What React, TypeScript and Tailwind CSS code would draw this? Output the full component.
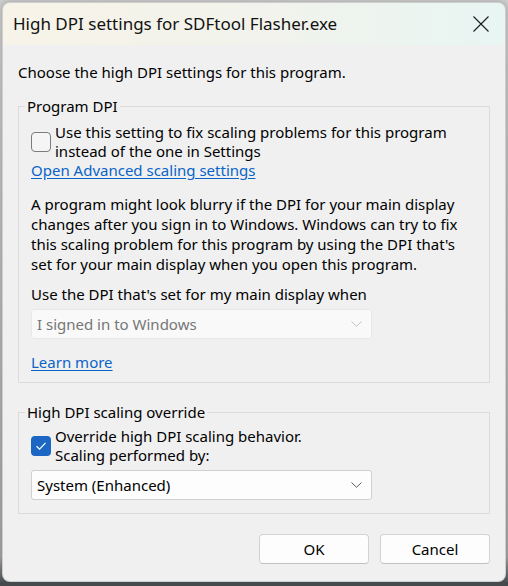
import { ChevronDown } from 'lucide-react';

function Check({ checked }: { checked?: boolean }) {
  if (checked) {
    return (
      <span className="w-[20px] h-[20px] shrink-0 rounded-[4px] bg-[#1b67c3] flex items-center justify-center">
        <svg width="12" height="10" viewBox="0 0 12 10" fill="none">
          <path d="M1.5 5.2 L4.6 8.2 L10.5 1.8" stroke="#ffffff" strokeWidth="1.2" />
        </svg>
      </span>
    );
  }
  return (
    <span className="w-[20px] h-[20px] shrink-0 rounded-[4px] border border-[#7c7c7c] bg-[#f5f5f5]" />
  );
}

function Combo({ label, disabled }: { label: string; disabled?: boolean }) {
  return (
    <div
      className={
        disabled
          ? 'w-[341px] h-[30px] flex items-center justify-between pl-[5px] pr-[9px] rounded-[3px] border border-[#e8e8e8] bg-[#f9f9f9] text-[#767676]'
          : 'w-[341px] h-[30px] flex items-center justify-between pl-[5px] pr-[9px] rounded-[3px] border border-[#d0d0d0] bg-[#fdfdfd] text-black'
      }
    >
      <span className="leading-[20px]">{label}</span>
      <svg width="11" height="6" viewBox="0 0 11 6" fill="none">
        <path d="M0.5 0.5 L5.5 5.3 L10.5 0.5" stroke={disabled ? '#c2c2c2' : '#5c5c5c'} strokeWidth="1" />
      </svg>
    </div>
  );
}

export default function App() {
  return (
    <div className="w-[508px] h-[586px] overflow-hidden flex flex-col bg-[linear-gradient(180deg,#cfcfcf_0%,#a8a8a8_95%,#3d474c_100%)] font-['Noto_Sans',sans-serif] text-[15px] text-black">
      <div className="ml-[2px] mt-[2px] w-[504px] h-[580px] shrink-0 rounded-[8px] overflow-hidden flex flex-col bg-[#f0f0f0] border border-[#b9b9b9]/60 shadow-[0_0_6px_rgba(0,0,0,0.25)]">
        {/* title bar */}
        <div className="h-[42px] shrink-0 flex items-center justify-between pl-[10px] pr-[16px] bg-[linear-gradient(90deg,#f7f3e8_0%,#f1f3ec_55%,#e8f5f3_100%)]">
          <span className="text-[17px] leading-[20px] text-[#111]">High DPI settings for SDFtool Flasher.exe</span>
          <svg width="16" height="16" viewBox="0 0 16 16" fill="none">
            <path d="M0.5 0.5 L15.5 15.5 M15.5 0.5 L0.5 15.5" stroke="#1a1a1a" strokeWidth="1.1" />
          </svg>
        </div>

        {/* body */}
        <div className="flex-1 flex flex-col px-[15px] pt-[17px]">
          <p className="leading-[20px]">Choose the high DPI settings for this program.</p>

          <fieldset className="mt-[14px] border border-[#dcdcdc] px-[6px] pb-[10px]">
            <legend className="px-[2px] leading-[20px]">Program DPI</legend>
            <div className="pl-[6px] flex flex-col items-start">
              <div className="mt-[7px] flex items-center gap-[4px]">
                <Check />
                <div className="leading-[19px]">
                  Use this setting to fix scaling problems for this program
                  <br />
                  instead of the one in Settings
                </div>
              </div>
              <a className="leading-[19px] text-[#0a64c8] underline underline-offset-[2px]">
                Open Advanced scaling settings
              </a>
              <p className="mt-[14px] leading-[20px]">
                A program might look blurry if the DPI for your main display
                <br />
                changes after you sign in to Windows. Windows can try to fix
                <br />
                this scaling problem for this program by using the DPI that's
                <br />
                set for your main display when you open this program.
              </p>
              <p className="mt-[10px] leading-[20px]">Use the DPI that's set for my main display when</p>
              <div className="mt-[5px]">
                <Combo label="I signed in to Windows" disabled />
              </div>
              <a className="mt-[13px] leading-[20px] text-[#0a64c8] underline underline-offset-[2px]">
                Learn more
              </a>
            </div>
          </fieldset>

          <fieldset className="mt-[19px] border border-[#dcdcdc] px-[6px] pb-[13px]">
            <legend className="px-[2px] leading-[20px]">High DPI scaling override</legend>
            <div className="pl-[6px] flex flex-col items-start">
              <div className="mt-[5px] flex items-center gap-[4px]">
                <Check checked />
                <div className="leading-[19px]">
                  Override high DPI scaling behavior.
                  <br />
                  Scaling performed by:
                </div>
              </div>
              <div className="mt-[5px]">
                <Combo label="System (Enhanced)" />
              </div>
            </div>
          </fieldset>

          <div className="mt-[20px] flex justify-end gap-[11px]">
            <button className="w-[110px] h-[30px] rounded-[4px] border border-[#d3d3d3] border-b-[#c2c2c2] bg-[#fdfdfd] leading-[20px]">
              OK
            </button>
            <button className="w-[110px] h-[30px] rounded-[4px] border border-[#d3d3d3] border-b-[#c2c2c2] bg-[#fdfdfd] leading-[20px]">
              Cancel
            </button>
          </div>
        </div>
      </div>
      <div className="flex-1 bg-[#474a4c]" />
    </div>
  );
}
